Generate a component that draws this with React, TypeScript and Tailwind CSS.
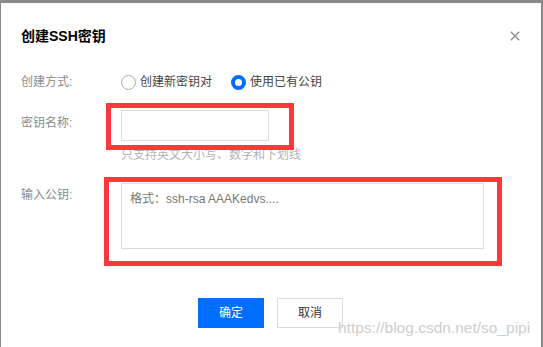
import React from "react";

export default function App() {
  const font = "font-['Liberation_Sans','Noto_Sans_CJK_SC',sans-serif]";
  return (
    <div
      className={`relative w-[543px] h-[347px] overflow-hidden bg-white border-t-[3px] border-l-[1.5px] border-r-2 border-[#8a8a8a] ${font}`}
    >
      <div className="pl-5 pr-5 pt-[23px]">
        {/* Header */}
        <div className="flex items-center justify-between">
          <h1 className="text-[14px] leading-5 font-bold text-black">创建SSH密钥</h1>
          <svg width="10" height="10" viewBox="0 0 10 10" className="mr-[1px]">
            <path d="M0.8 0.8 L9.2 9.2 M9.2 0.8 L0.8 9.2" stroke="#8a8a8a" strokeWidth="1.3" fill="none" />
          </svg>
        </div>

        {/* Row 1 */}
        <div className="mt-[26px] flex items-center text-[12px] leading-5">
          <div className="w-[100px] text-[#8a8a8a]">创建方式:</div>
          <label className="flex items-center gap-[4px] text-[#444]">
            <span className="w-[15px] h-[15px] rounded-full border border-[#aaa] bg-white" />
            <span>创建新密钥对</span>
          </label>
          <label className="ml-[19px] flex items-center gap-[4px] text-[#444]">
            <span className="w-[15px] h-[15px] rounded-full border-[4.5px] border-[#006eff] bg-white" />
            <span>使用已有公钥</span>
          </label>
        </div>

        {/* Row 2 */}
        <div className="mt-[18px] flex items-start text-[12px] leading-5">
          <div className="w-[100px] mt-[3px] text-[#8a8a8a]">密钥名称:</div>
          <div className="flex flex-col">
            <div className="w-[148px] h-[31px] border border-[#dcdcdc] bg-white" />
            <div className="mt-[4px] text-[#b3b3b3]">只支持英文大小写、数字和下划线</div>
          </div>
        </div>

        {/* Row 3 */}
        <div className="mt-[18px] flex items-start text-[12px] leading-5">
          <div className="w-[100px] mt-[2px] text-[#8a8a8a]">输入公钥:</div>
          <textarea
            className={`w-[363px] h-[66px] border border-[#dcdcdc] bg-white resize-none outline-none pl-[8px] pt-[5px] text-[12px] leading-5 text-[#333] placeholder:text-[#777] ${font}`}
            placeholder="格式：ssh-rsa AAAKedvs...."
          />
        </div>

        {/* Buttons */}
        <div className="mt-[49px] flex justify-center gap-[13px] pr-[1px] text-[12px]">
          <button className="w-[66px] h-[30px] bg-[#006eff] text-white">确定</button>
          <button className="w-[66px] h-[30px] border border-[#dcdcdc] bg-white text-[#333]">取消</button>
        </div>
      </div>

      {/* Annotation boxes */}
      <div className="absolute left-[104.5px] top-[100px] w-[188px] h-[47px] border-[5px] border-[#f83a3a]" />
      <div className="absolute left-[102.5px] top-[174px] w-[398px] h-[89px] border-[5px] border-[#f83a3a]" />

      {/* Watermark */}
      <div className="absolute left-[337px] top-[316px] text-[15.5px] leading-[18px] text-[#cdcdcd] font-['Liberation_Sans',sans-serif] [text-shadow:0_0_1px_#fff]">
        https://blog.csdn.net/so_pipi
      </div>
    </div>
  );
}
